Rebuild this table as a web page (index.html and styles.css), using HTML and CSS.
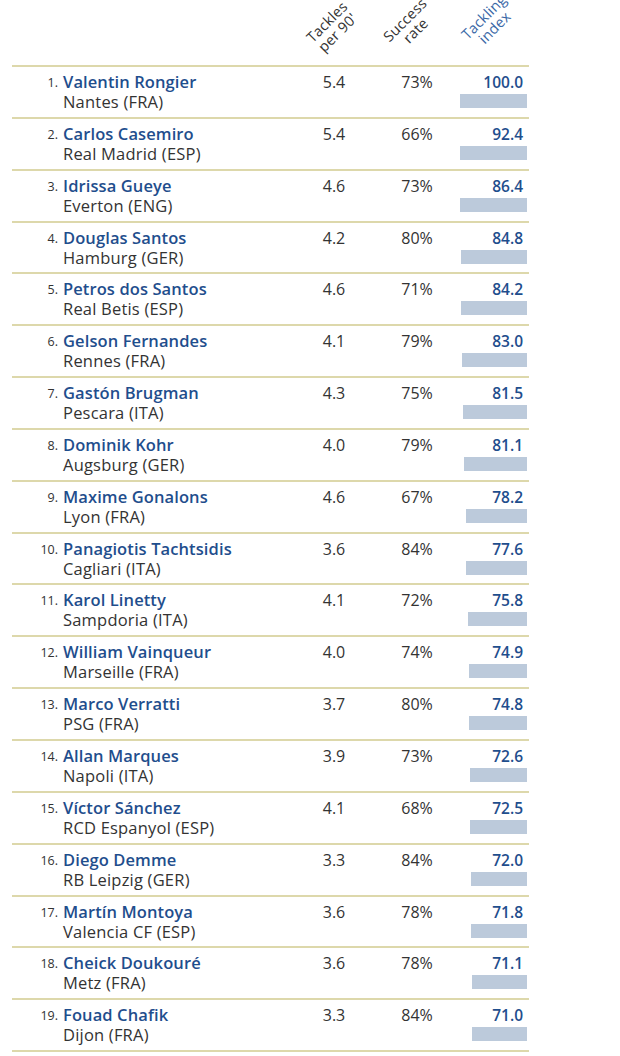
FILE: index.html
```html
<!DOCTYPE html>
<html lang="en">
<head>
<meta charset="utf-8">
<link rel="stylesheet" href="styles.css">
</head>
<body>
<div class="table">
  <div class="head">
    <div class="c-rank"></div>
    <div class="c-name"></div>
    <div class="c-num"><span class="rot rot-a">Tackles<br>per 90'</span></div>
    <div class="c-num"><span class="rot rot-b">Success<br>rate</span></div>
    <div class="c-idx"><span class="rot rot-c blue">Tackling<br>index</span></div>
  </div>

  <div class="row"><div class="c-rank">1.</div><div class="c-name"><div class="name">Valentin Rongier</div><div class="team">Nantes (FRA)</div></div><div class="c-num">5.4</div><div class="c-num">73%</div><div class="c-idx"><div class="val">100.0</div><div class="bar" style="width:100%"></div></div></div>
  <div class="row"><div class="c-rank">2.</div><div class="c-name"><div class="name">Carlos Casemiro</div><div class="team">Real Madrid (ESP)</div></div><div class="c-num">5.4</div><div class="c-num">66%</div><div class="c-idx"><div class="val">92.4</div><div class="bar" style="width:92.4%"></div></div></div>
  <div class="row"><div class="c-rank">3.</div><div class="c-name"><div class="name">Idrissa Gueye</div><div class="team">Everton (ENG)</div></div><div class="c-num">4.6</div><div class="c-num">73%</div><div class="c-idx"><div class="val">86.4</div><div class="bar" style="width:86.4%"></div></div></div>
  <div class="row"><div class="c-rank">4.</div><div class="c-name"><div class="name">Douglas Santos</div><div class="team">Hamburg (GER)</div></div><div class="c-num">4.2</div><div class="c-num">80%</div><div class="c-idx"><div class="val">84.8</div><div class="bar" style="width:84.8%"></div></div></div>
  <div class="row"><div class="c-rank">5.</div><div class="c-name"><div class="name">Petros dos Santos</div><div class="team">Real Betis (ESP)</div></div><div class="c-num">4.6</div><div class="c-num">71%</div><div class="c-idx"><div class="val">84.2</div><div class="bar" style="width:84.2%"></div></div></div>
  <div class="row"><div class="c-rank">6.</div><div class="c-name"><div class="name">Gelson Fernandes</div><div class="team">Rennes (FRA)</div></div><div class="c-num">4.1</div><div class="c-num">79%</div><div class="c-idx"><div class="val">83.0</div><div class="bar" style="width:83%"></div></div></div>
  <div class="row"><div class="c-rank">7.</div><div class="c-name"><div class="name">Gastón Brugman</div><div class="team">Pescara (ITA)</div></div><div class="c-num">4.3</div><div class="c-num">75%</div><div class="c-idx"><div class="val">81.5</div><div class="bar" style="width:81.5%"></div></div></div>
  <div class="row"><div class="c-rank">8.</div><div class="c-name"><div class="name">Dominik Kohr</div><div class="team">Augsburg (GER)</div></div><div class="c-num">4.0</div><div class="c-num">79%</div><div class="c-idx"><div class="val">81.1</div><div class="bar" style="width:81.1%"></div></div></div>
  <div class="row"><div class="c-rank">9.</div><div class="c-name"><div class="name">Maxime Gonalons</div><div class="team">Lyon (FRA)</div></div><div class="c-num">4.6</div><div class="c-num">67%</div><div class="c-idx"><div class="val">78.2</div><div class="bar" style="width:78.2%"></div></div></div>
  <div class="row"><div class="c-rank">10.</div><div class="c-name"><div class="name">Panagiotis Tachtsidis</div><div class="team">Cagliari (ITA)</div></div><div class="c-num">3.6</div><div class="c-num">84%</div><div class="c-idx"><div class="val">77.6</div><div class="bar" style="width:77.6%"></div></div></div>
  <div class="row"><div class="c-rank">11.</div><div class="c-name"><div class="name">Karol Linetty</div><div class="team">Sampdoria (ITA)</div></div><div class="c-num">4.1</div><div class="c-num">72%</div><div class="c-idx"><div class="val">75.8</div><div class="bar" style="width:75.8%"></div></div></div>
  <div class="row"><div class="c-rank">12.</div><div class="c-name"><div class="name">William Vainqueur</div><div class="team">Marseille (FRA)</div></div><div class="c-num">4.0</div><div class="c-num">74%</div><div class="c-idx"><div class="val">74.9</div><div class="bar" style="width:74.9%"></div></div></div>
  <div class="row"><div class="c-rank">13.</div><div class="c-name"><div class="name">Marco Verratti</div><div class="team">PSG (FRA)</div></div><div class="c-num">3.7</div><div class="c-num">80%</div><div class="c-idx"><div class="val">74.8</div><div class="bar" style="width:74.8%"></div></div></div>
  <div class="row"><div class="c-rank">14.</div><div class="c-name"><div class="name">Allan Marques</div><div class="team">Napoli (ITA)</div></div><div class="c-num">3.9</div><div class="c-num">73%</div><div class="c-idx"><div class="val">72.6</div><div class="bar" style="width:72.6%"></div></div></div>
  <div class="row"><div class="c-rank">15.</div><div class="c-name"><div class="name">Víctor Sánchez</div><div class="team">RCD Espanyol (ESP)</div></div><div class="c-num">4.1</div><div class="c-num">68%</div><div class="c-idx"><div class="val">72.5</div><div class="bar" style="width:72.5%"></div></div></div>
  <div class="row"><div class="c-rank">16.</div><div class="c-name"><div class="name">Diego Demme</div><div class="team">RB Leipzig (GER)</div></div><div class="c-num">3.3</div><div class="c-num">84%</div><div class="c-idx"><div class="val">72.0</div><div class="bar" style="width:72%"></div></div></div>
  <div class="row"><div class="c-rank">17.</div><div class="c-name"><div class="name">Martín Montoya</div><div class="team">Valencia CF (ESP)</div></div><div class="c-num">3.6</div><div class="c-num">78%</div><div class="c-idx"><div class="val">71.8</div><div class="bar" style="width:71.8%"></div></div></div>
  <div class="row"><div class="c-rank">18.</div><div class="c-name"><div class="name">Cheick Doukouré</div><div class="team">Metz (FRA)</div></div><div class="c-num">3.6</div><div class="c-num">78%</div><div class="c-idx"><div class="val">71.1</div><div class="bar" style="width:71.1%"></div></div></div>
  <div class="row"><div class="c-rank">19.</div><div class="c-name"><div class="name">Fouad Chafik</div><div class="team">Dijon (FRA)</div></div><div class="c-num">3.3</div><div class="c-num">84%</div><div class="c-idx"><div class="val">71.0</div><div class="bar" style="width:71%"></div></div></div>
  <div class="endline"></div>
</div>
</body>
</html>
```

FILE: styles.css
```css
html, body {
  margin: 0;
  padding: 0;
  background: #ffffff;
}
body {
  font-family: "Open Sans", "Liberation Sans", sans-serif;
  color: #333333;
  overflow: hidden;
}
.table {
  margin-left: 12px;
  width: 517px;
}
.head {
  display: flex;
  height: 65px;
}
.head > div {
  position: relative;
}
.rot {
  position: absolute;
  left: 50%;
  top: 50%;
  display: block;
  font-size: 14.5px;
  line-height: 15px;
  letter-spacing: 0.2px;
  text-align: center;
  white-space: nowrap;
  color: #333333;
  transform: translate(-50%, -50%) rotate(-45deg);
}
.rot-a { margin-left: -2px; margin-top: -6px; }
.rot-b { margin-left: -7px; margin-top: -8px; }
.rot-c { margin-left: -1px; margin-top: -11px; }
.blue { color: #3a68a6; }
.row {
  display: flex;
  border-top: 2px solid #ddd8ab;
  height: 49.85px;
}
.endline {
  border-top: 2px solid #ddd8ab;
}
.c-rank {
  width: 46px;
  flex: none;
  text-align: right;
  font-size: 12.5px;
  line-height: 20px;
  padding-top: 6px;
  color: #333333;
}
.head .c-rank { padding-top: 0; }
.c-name {
  flex: 1;
  padding-left: 5px;
  padding-top: 5px;
}
.head .c-name { padding: 0; }
.name {
  font-size: 16.5px;
  font-weight: 600;
  line-height: 20px;
  letter-spacing: 0.1px;
  color: #1f4e8d;
}
.team {
  font-size: 16.5px;
  line-height: 20px;
  letter-spacing: 0.2px;
  color: #333333;
}
.c-num {
  width: 68px;
  flex: none;
  text-align: center;
  font-size: 16px;
  line-height: 20px;
  padding-top: 5px;
  margin-right: 15px;
}
.c-num + .c-num { margin-right: 0; }
.head .c-num { padding-top: 0; }
.c-idx {
  width: 78px;
  flex: none;
  padding-top: 5px;
  display: flex;
  flex-direction: column;
  align-items: flex-end;
}
.head .c-idx { padding-top: 0; display: block; }
.val {
  font-size: 15.5px;
  font-weight: 600;
  line-height: 20px;
  color: #1f4e8d;
  margin-right: 6px;
}
.bar {
  max-width: 67px;
  flex: none;
  height: 14px;
  margin-top: 2px;
  margin-right: 2px;
  background: #bccadb;
}
```
